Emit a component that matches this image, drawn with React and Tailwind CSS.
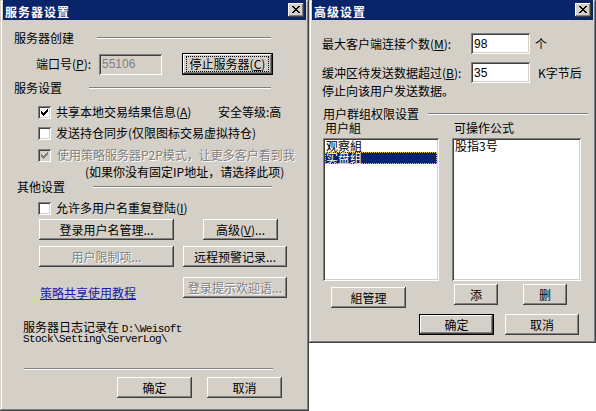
const RAISED =
  "shadow-[inset_-1px_-1px_0_#404040,inset_1px_1px_0_#fff,inset_-2px_-2px_0_#808080]";
const DEFAULT_BTN =
  "shadow-[inset_0_0_0_1px_#000,inset_-2px_-2px_0_#404040,inset_2px_2px_0_#fff,inset_-3px_-3px_0_#808080]";
const SUNKEN =
  "shadow-[inset_1px_1px_0_#808080,inset_-1px_-1px_0_#fff,inset_2px_2px_0_#404040,inset_-2px_-2px_0_#d4d0c8]";
const FRAME =
  "shadow-[inset_-1px_-1px_0_#404040,inset_1px_1px_0_#d4d0c8,inset_-2px_-2px_0_#808080,inset_2px_2px_0_#fff]";
const DIS = "text-[#808080] [text-shadow:1px_1px_0_#fff]";

const CHECK = [[3, 5], [4, 6], [5, 7], [6, 6], [7, 5], [8, 4], [9, 3]];
const XROWS = ["11000011", "01100110", "00111100", "00011000", "00111100", "01100110", "11000011"];

function CloseBtn() {
  return (
    <div className={`mt-[3px] flex h-[14px] w-[16px] items-center justify-center bg-[#d4d0c8] ${RAISED}`}>
      <svg width="8" height="7" viewBox="0 0 8 7" shapeRendering="crispEdges" className="-mt-px">
        {XROWS.map((row, y) =>
          row.split("").map((c, x) =>
            c === "1" ? <rect key={`${x}-${y}`} x={x} y={y} width="1" height="1" fill="#000" /> : null
          )
        )}
      </svg>
    </div>
  );
}

function TitleBar({ title }) {
  return (
    <div className="flex h-[20px] items-start justify-between bg-[#0a246a] pl-[2px] pr-[2px]">
      <span className="mt-[5px] text-[12px] font-bold leading-[14px] tracking-[1px] text-white">{title}</span>
      <CloseBtn />
    </div>
  );
}

function Btn({ children, className = "", disabled, isDefault, focus }) {
  return (
    <div
      className={`flex h-[21px] shrink-0 items-center justify-center bg-[#d4d0c8] text-[12px] leading-[14px] ${
        isDefault ? DEFAULT_BTN : RAISED
      } ${disabled ? DIS : "text-black"} ${className}`}
    >
      {focus ? (
        <span className="px-[3px] outline-1 outline-dotted outline-black">{children}</span>
      ) : (
        children
      )}
    </div>
  );
}

function Box({ checked, disabled }) {
  return (
    <div className={`h-[13px] w-[13px] shrink-0 ${disabled ? "bg-[#d4d0c8]" : "bg-white"} ${SUNKEN}`}>
      {checked && (
        <svg width="13" height="13" viewBox="0 0 13 13" shapeRendering="crispEdges">
          {CHECK.map(([x, y]) => (
            <rect key={x} x={x} y={y} width="1" height="3" fill={disabled ? "#808080" : "#000"} />
          ))}
        </svg>
      )}
    </div>
  );
}

function Etch({ className = "" }) {
  return <div className={`h-[2px] border-t border-b border-t-[#808080] border-b-white ${className}`} />;
}

function Field({ value, disabled, className = "" }) {
  return (
    <div
      className={`flex h-[21px] shrink-0 items-center pl-[3px] font-['Liberation_Sans',sans-serif] text-[12px] ${
        disabled ? "bg-[#d4d0c8] text-[#808080]" : "bg-white text-black"
      } ${SUNKEN} ${className}`}
    >
      {value}
    </div>
  );
}

function ServerWindow() {
  return (
    <div className={`flex h-[411px] w-[309px] shrink-0 flex-col bg-[#d4d0c8] px-[3px] ${FRAME}`}>
      <TitleBar title="服务器设置" />

      {/* 服务器创建 */}
      <div className="mt-[11px] flex h-[14px] items-center pl-[11px]">
        <span>服务器创建</span>
        <Etch className="ml-[23px] w-[174px]" />
      </div>
      <div className="mt-[8px] flex h-[22px] items-center pl-[33px]">
        <span className="w-[63px]">
          端口号(<u>P</u>):
        </span>
        <Field value="55106" disabled className="w-[63px]" />
        <Btn isDefault focus className="ml-[20px] h-[22px] w-[91px]">
          停止服务器(<u>C</u>)
        </Btn>
      </div>

      {/* 服务设置 */}
      <div className="mt-[6px] flex h-[14px] items-center pl-[11px]">
        <span>服务设置</span>
        <Etch className="ml-[27px] w-[182px]" />
      </div>
      <div className="mt-[10px] flex h-[14px] items-center pl-[35px]">
        <Box checked />
        <span className="ml-[5px] w-[162px]">
          共享本地交易结果信息(<u>A</u>)
        </span>
        <span>安全等级:高</span>
      </div>
      <div className="mt-[7px] flex h-[14px] items-center pl-[35px]">
        <Box />
        <span className="ml-[5px]">发送持仓同步(仅限图标交易虚拟持仓)</span>
      </div>
      <div className="mt-[8px] flex h-[14px] items-center pl-[35px]">
        <Box checked disabled />
        <span className={`ml-[6px] ${DIS}`}>使用策略服务器P2P模式，让更多客户看到我</span>
      </div>
      <div className="mt-[3px] flex h-[14px] items-center pl-[82px]">
        <span>(如果你没有固定IP地址，请选择此项)</span>
      </div>

      {/* 其他设置 */}
      <div className="mt-[1px] flex h-[14px] items-center pl-[14px]">
        <span>其他设置</span>
        <Etch className="ml-[28px] w-[179px]" />
      </div>
      <div className="mt-[7px] flex h-[14px] items-center pl-[35px]">
        <Box />
        <span className="ml-[5px]">
          允许多用户名重复登陆(<u>I</u>)
        </span>
      </div>
      <div className="mt-[4px] flex items-center pl-[36px]">
        <Btn className="w-[135px]">登录用户名管理...</Btn>
        <Btn className="ml-[29px] w-[75px]">
          高级(<u>V</u>)...
        </Btn>
      </div>
      <div className="mt-[6px] flex items-center pl-[36px]">
        <Btn disabled className="w-[135px]">
          用户限制项...
        </Btn>
        <Btn className="ml-[9px] w-[104px]">远程预警记录...</Btn>
      </div>
      <div className="mt-[10px] flex items-start pl-[37px]">
        <span className="mt-[9px] w-[143px] leading-[13px] text-[#1a1aa6] underline">策略共享使用教程</span>
        <Btn disabled className="w-[104px]">
          登录提示欢迎语...
        </Btn>
      </div>

      {/* 日志 */}
      <div className="mt-[21px] pl-[20px] leading-[13px]">
        <div className="h-[13px]">
          服务器日志记录在{" "}
          <span className="font-['Liberation_Mono',monospace] text-[11px] tracking-[-0.6px]">{"D:\\Weisoft"}</span>
        </div>
        <div className="h-[13px] font-['Liberation_Mono',monospace] text-[11px] tracking-[-0.6px]">
          {"Stock\\Setting\\ServerLog\\"}
        </div>
      </div>

      <Etch className="ml-[21px] mt-[22px] w-[249px]" />
      <div className="mt-[7px] flex items-center pl-[114px]">
        <Btn className="w-[75px]">确定</Btn>
        <Btn className="ml-[15px] w-[75px]">取消</Btn>
      </div>
    </div>
  );
}

function ListBox({ items, selected, className = "" }) {
  return (
    <div className={`flex h-[143px] shrink-0 flex-col bg-white p-[2px] ${SUNKEN} ${className}`}>
      {items.map((it, i) => (
        <div
          key={it}
          className={`h-[12px] pl-[1px] leading-[12px] ${
            i === selected
              ? "bg-[#0a246a] text-white outline-1 -outline-offset-1 outline-dotted outline-[#e8c860]"
              : "text-black"
          }`}
        >
          {it}
        </div>
      ))}
    </div>
  );
}

function AdvancedWindow() {
  return (
    <div className={`flex h-[343px] w-[287px] shrink-0 flex-col bg-[#d4d0c8] px-[3px] ${FRAME}`}>
      <TitleBar title="高级设置" />

      <div className="mt-[13px] flex items-center pl-[10px]">
        <span className="w-[149px]">
          最大客户端连接个数(<u>M</u>):
        </span>
        <Field value="98" className="w-[59px]" />
        <span className="ml-[5px]">个</span>
      </div>
      <div className="mt-[8px] flex items-center pl-[10px]">
        <span className="w-[149px]">
          缓冲区待发送数据超过(<u>B</u>):
        </span>
        <Field value="35" className="w-[59px]" />
        <span className="ml-[8px]">K字节后</span>
      </div>
      <div className="mt-[1px] flex h-[14px] items-center pl-[10px]">停止向该用户发送数据。</div>

      <div className="mt-[9px] flex h-[14px] items-center pl-[11px]">
        <span>用户群组权限设置</span>
        <Etch className="ml-[9px] w-[160px]" />
      </div>
      <div className="flex h-[14px] items-center pl-[13px]">
        <span className="w-[129px]">用户組</span>
        <span>可操作公式</span>
      </div>
      <div className="mt-[3px] flex pl-[11px]">
        <ListBox items={["观察組", "实盘组"]} selected={1} className="w-[116px]" />
        <ListBox items={["股指3号"]} className="ml-[13px] w-[129px]" />
      </div>
      <div className="mt-[3px] flex items-start pl-[19px]">
        <Btn className="mt-[3px] w-[75px]">組管理</Btn>
        <Btn className="ml-[48px] w-[44px]">添</Btn>
        <Btn className="ml-[25px] w-[44px]">删</Btn>
      </div>
      <div className="mt-[6px] flex items-center pl-[107px]">
        <Btn isDefault className="w-[75px]">
          确定
        </Btn>
        <Btn className="ml-[11px] w-[74px]">取消</Btn>
      </div>
    </div>
  );
}

export default function App() {
  return (
    <div className="flex h-[411px] w-[596px] items-start overflow-hidden bg-white font-['Noto_Sans_CJK_SC',sans-serif] text-[12px] leading-[14px] text-black">
      <ServerWindow />
      <AdvancedWindow />
    </div>
  );
}
